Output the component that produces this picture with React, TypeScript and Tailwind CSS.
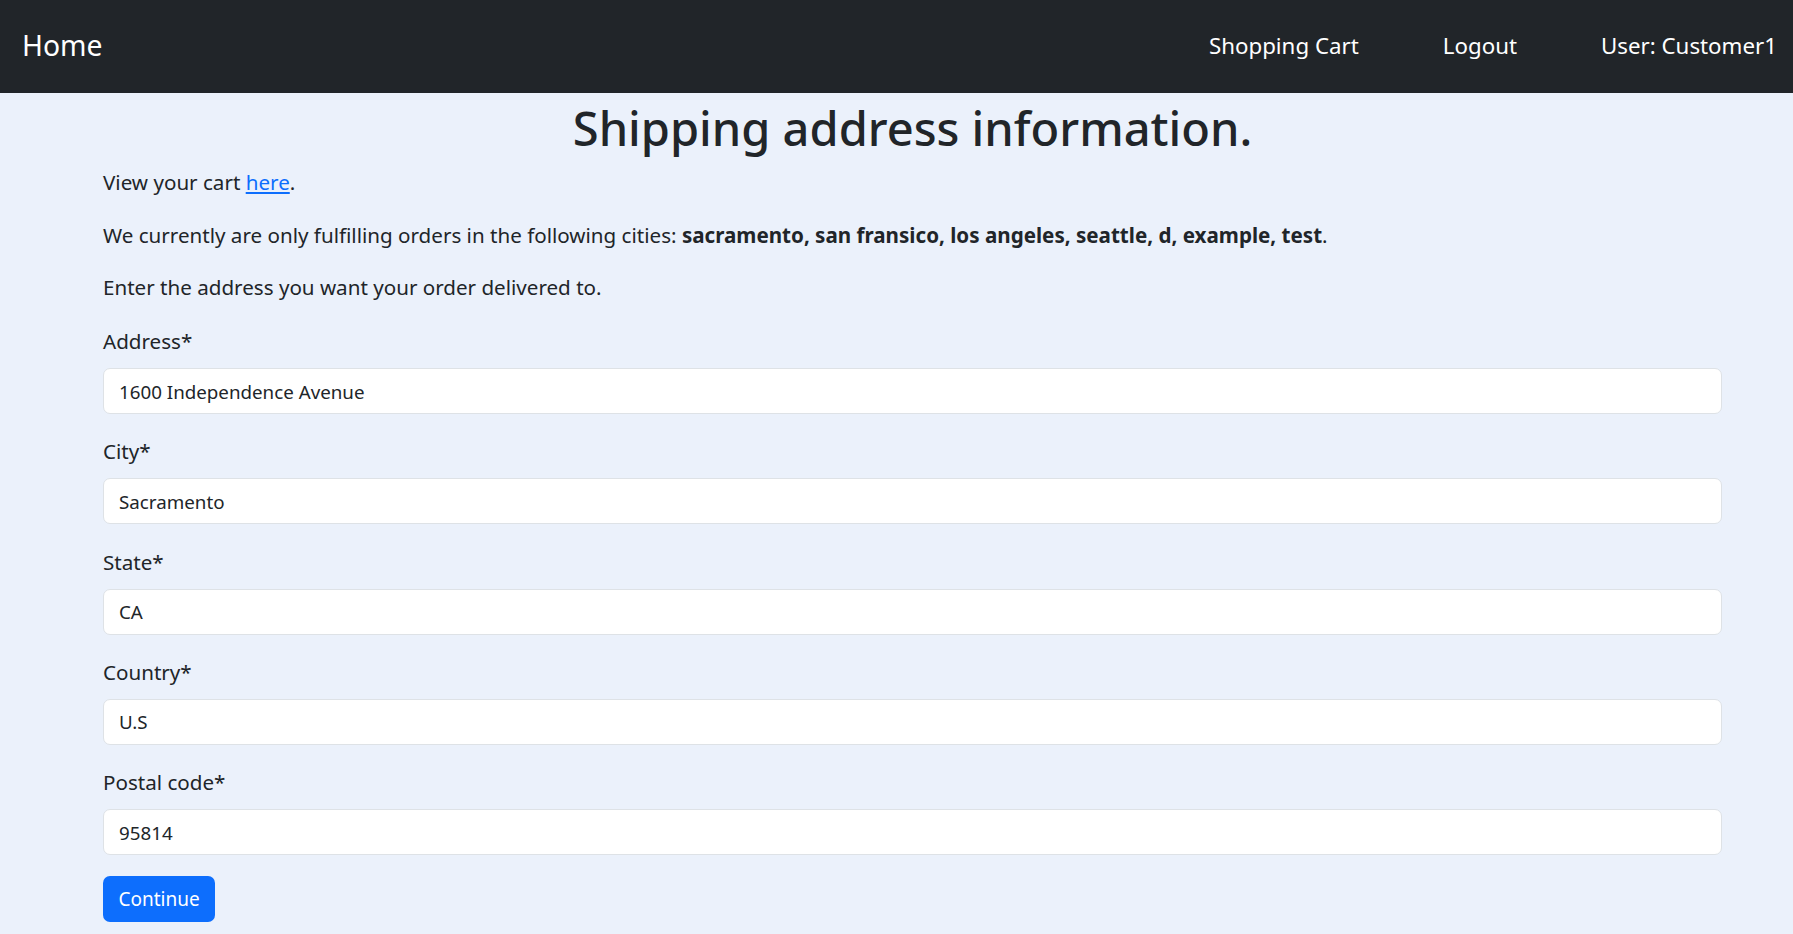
import React from 'react';

const fields = [
  { id: 'address', label: 'Address*', value: '1600 Independence Avenue' },
  { id: 'city', label: 'City*', value: 'Sacramento' },
  { id: 'state', label: 'State*', value: 'CA' },
  { id: 'country', label: 'Country*', value: 'U.S' },
  { id: 'postal', label: 'Postal code*', value: '95814' },
];

const cities = 'sacramento, san fransico, los angeles, seattle, d, example, test';

const NavBar: React.FC = () => (
  <nav className="h-[93px] bg-[#212529] flex items-center text-white pb-[2px]">
    <a href="#" className="pl-[22px] text-[28.3px] leading-none">Home</a>
    <div className="ml-auto flex items-center gap-[84px] pr-[16px] text-[22.3px] leading-none pt-[1px]">
      <a href="#">Shopping Cart</a>
      <a href="#">Logout</a>
      <span>User: Customer1</span>
    </div>
  </nav>
);

export default function App() {
  return (
    <div className="min-h-screen bg-[#ebf1fb] text-[#212529] font-['Noto_Sans',sans-serif]">
      <NavBar />
      <main className="pl-[103px] pr-[71px]">
        <h1 className="text-center text-[47px] leading-[56px] font-medium mt-[7px] mb-[11px]">
          Shipping address information.
        </h1>
        <div className="text-[20.6px] leading-[31px]">
          <p className="mb-[21.5px]">
            View your cart <a href="#" className="text-[#0d6efd] underline">here</a>.
          </p>
          <p className="mb-[21.5px]">
            We currently are only fulfilling orders in the following cities: <b className="font-bold">{cities}</b>.
          </p>
          <p className="mb-[23px]">Enter the address you want your order delivered to.</p>
          <form onSubmit={(e) => e.preventDefault()}>
            {fields.map((f) => (
              <div key={f.id} className="mb-[22.3px]">
                <label htmlFor={f.id} className="block mb-[11px]">{f.label}</label>
                <input
                  id={f.id}
                  type="text"
                  defaultValue={f.value}
                  className="block w-full h-[46px] px-[15px] bg-white border border-[#dee2e6] rounded-[7px] text-[18.75px] text-[#212529] outline-none"
                />
              </div>
            ))}
            <button
              type="submit"
              className="-mt-[1px] h-[46px] w-[112px] bg-[#0d6efd] text-white rounded-[7px] text-[19px]"
            >
              Continue
            </button>
          </form>
        </div>
      </main>
    </div>
  );
}
